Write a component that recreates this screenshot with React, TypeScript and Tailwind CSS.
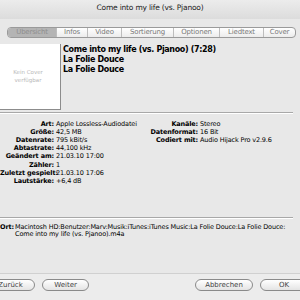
const tabs = ["Übersicht", "Infos", "Video", "Sortierung", "Optionen", "Liedtext", "Cover"];

const leftRows: [string, string][] = [
  ["Art:", "Apple Lossless-Audiodatei"],
  ["Größe:", "42,5 MB"],
  ["Datenrate:", "795 kBit/s"],
  ["Abtastrate:", "44,100 kHz"],
  ["Geändert am:", "21.03.10 17:00"],
  ["Zähler:", "1"],
  ["Zuletzt gespielt:", "21.03.10 17:06"],
  ["Lautstärke:", "+6,4 dB"],
];

const rightRows: [string, string][] = [
  ["Kanäle:", "Stereo"],
  ["Datenformat:", "16 Bit"],
  ["Codiert mit:", "Audio Hijack Pro v2.9.6"],
];

function Btn({ label, w }: { label: string; w: string }) {
  return (
    <div
      className={`${w} h-[12px] rounded-full border border-[#8a8a8a] bg-gradient-to-b from-white to-[#e4e4e4] flex items-center justify-center text-[7px] text-[#444] shrink-0`}
    >
      {label}
    </div>
  );
}

export default function App() {
  return (
    <div className="w-[300px] h-[300px] overflow-hidden bg-[#e8e8e8] flex flex-col font-['DejaVu_Sans',sans-serif] text-black leading-none">
      {/* title bar */}
      <div className="h-[19px] shrink-0 flex items-center justify-center bg-gradient-to-b from-[#ececec] to-[#dcdcdc] text-[7.5px] tracking-[-0.2px] text-[#222] pb-[4px]">
        Come into my life (vs. Pjanoo)
      </div>

      {/* tabs */}
      <div className="h-[23px] shrink-0 flex items-center pl-[7px] pt-[3px]">
        <div className="flex h-[11px] w-[289px] rounded-[4px] border border-[#9a9a9a] bg-gradient-to-b from-white to-[#ececec] overflow-hidden">
          {tabs.map((t, i) => (
            <div
              key={t}
              className={`flex items-center justify-center text-[7px] tracking-[-0.2px] ${
                i === 0 ? "bg-[#b4b4b4] text-[#8e8e8e] w-[48px]" : "text-[#7a7a7a] border-l border-[#bdbdbd]"
              } ${i === 1 ? "w-[31px]" : ""} ${i === 2 ? "w-[34px]" : ""} ${i === 3 ? "w-[52px]" : ""} ${
                i === 4 ? "w-[46px]" : ""
              } ${i === 5 ? "w-[44px]" : ""} ${i === 6 ? "flex-1" : ""}`}
            >
              {t}
            </div>
          ))}
        </div>
      </div>

      {/* header: cover + title */}
      <div className="flex shrink-0 pt-[2px]">
        <div className="w-[61px] h-[66px] bg-white border-r border-b border-[#8c8c8c] flex flex-col items-center justify-center gap-[3px] text-[5.5px] text-[#b8b8b8] pr-[4px]">
          <span>Kein Cover</span>
          <span>verfügbar</span>
        </div>
        <div className="pl-[2px] pt-[2px] flex flex-col gap-[2px] text-[8px] font-bold tracking-[-0.35px] leading-[8px]">
          <span>Come into my life (vs. Pjanoo) (7:28)</span>
          <span>La Folie Douce</span>
          <span>La Folie Douce</span>
        </div>
      </div>

      <div className="mt-[2px] w-[293px] h-[2px] border-t border-[#a8a8a8] border-b border-b-white shrink-0" />

      {/* info */}
      <div className="flex shrink-0 pt-[6px] h-[103px] text-[6.5px] tracking-[-0.15px]">
        <div className="w-[150px] flex flex-col">
          {leftRows.map(([l, v]) => (
            <div key={l} className="flex h-[8.15px] items-center">
              <span className="w-[54px] text-right font-bold whitespace-nowrap">{l}</span>
              <span className="pl-[2px] whitespace-nowrap">{v}</span>
            </div>
          ))}
        </div>
        <div className="flex flex-col">
          {rightRows.map(([l, v]) => (
            <div key={l} className="flex h-[8.15px] items-center">
              <span className="w-[48px] text-right font-bold whitespace-nowrap">{l}</span>
              <span className="pl-[2px] whitespace-nowrap">{v}</span>
            </div>
          ))}
        </div>
      </div>

      <div className="w-[293px] h-[2px] border-t border-[#a8a8a8] border-b border-b-white shrink-0" />

      {/* location */}
      <div className="flex h-[54px] shrink-0 pt-[5px] text-[6.5px] tracking-[-0.15px] leading-[7px]">
        <span className="w-[15px] font-bold">Ort:</span>
        <span className="w-[275px]">
          Macintosh HD:Benutzer:Marv:Musik:iTunes:iTunes Music:La Folie Douce:La Folie Douce: Come into my life (vs.
          Pjanoo).m4a
        </span>
      </div>

      {/* bottom buttons */}
      <div className="flex-1 border-t border-[#d0d0d0] bg-[#ececec] flex items-start pt-[5px]">
        <div className="flex items-center ml-[-14px] gap-[7px]">
          <Btn label="Zurück" w="w-[49px]" />
          <Btn label="Weiter" w="w-[47px]" />
        </div>
        <div className="flex items-center ml-[106px] gap-[7px]">
          <Btn label="Abbrechen" w="w-[58px]" />
          <Btn label="OK" w="w-[48px]" />
        </div>
      </div>
    </div>
  );
}
